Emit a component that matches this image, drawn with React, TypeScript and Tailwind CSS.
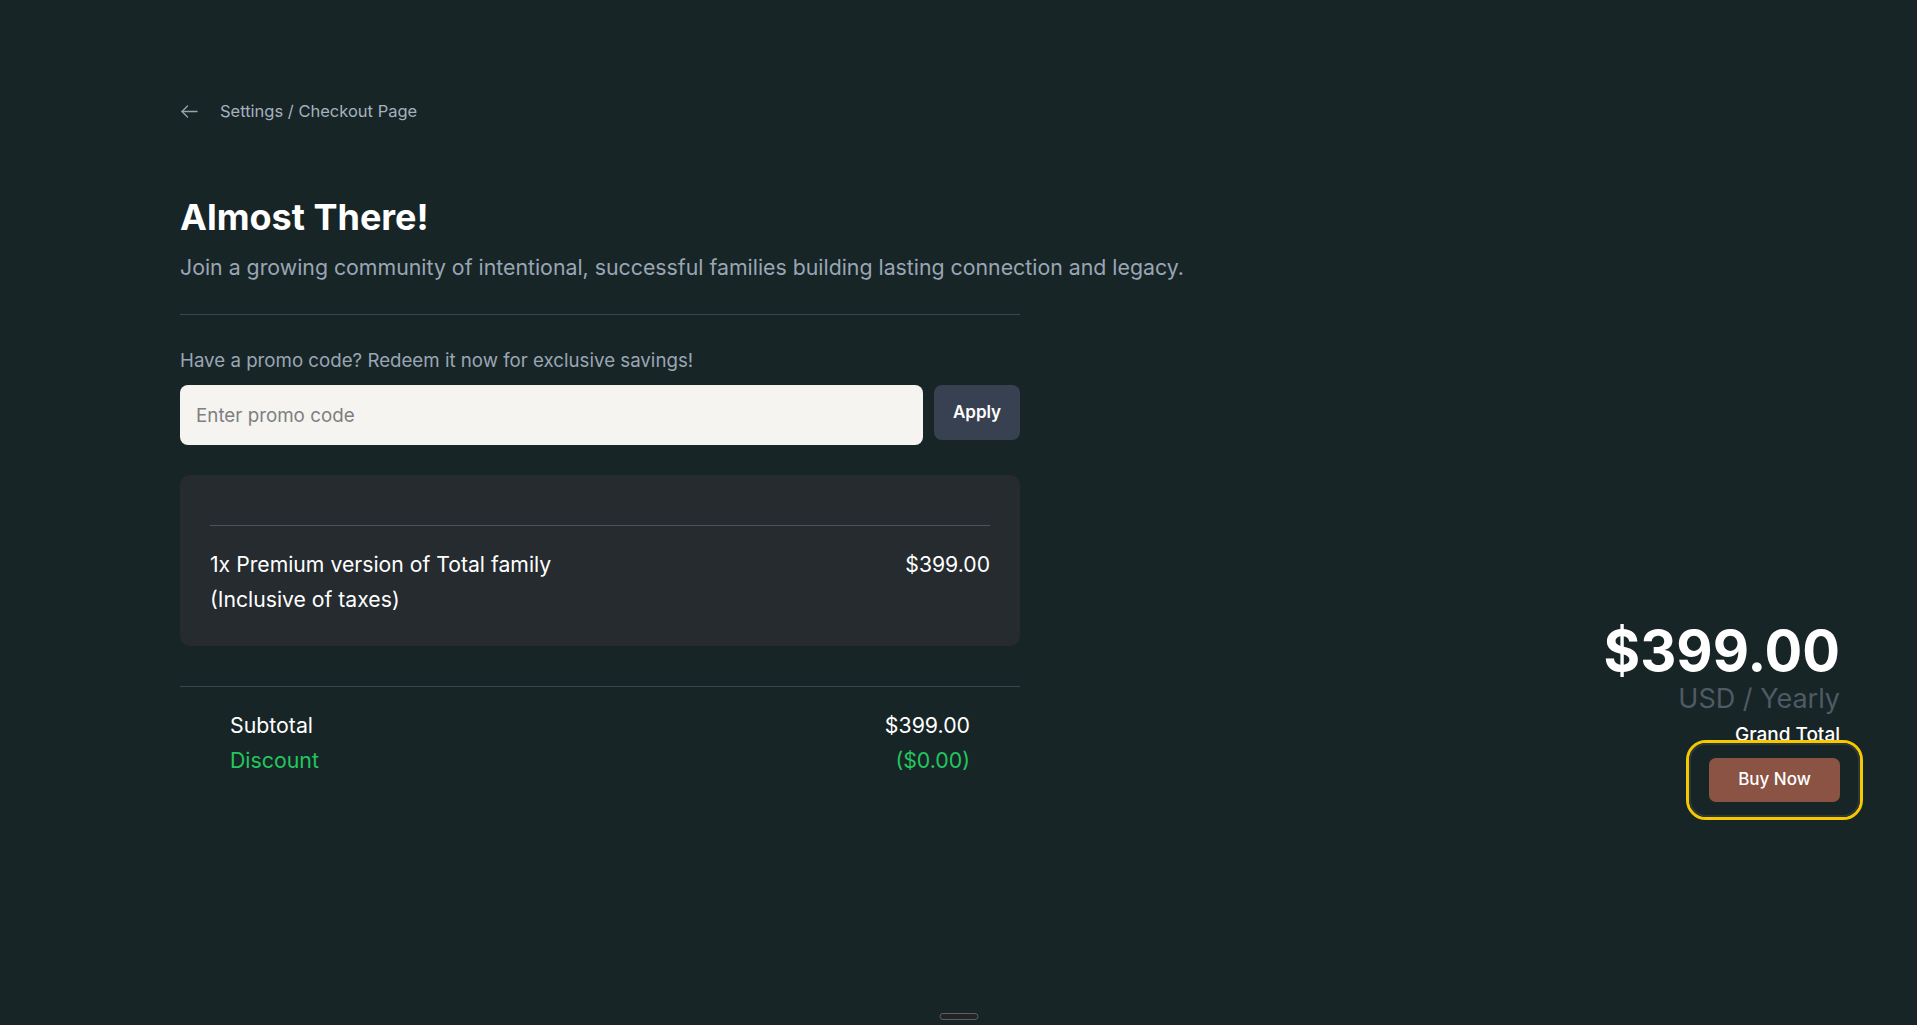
import React from 'react';

function BackArrow() {
  return (
    <svg width="17" height="13" viewBox="0 0 17 13" fill="none" stroke="#9aa3ad" strokeWidth="1.3" strokeLinecap="round" strokeLinejoin="round">
      <path d="M16 6.5H1" />
      <path d="M6.5 1 1 6.5 6.5 12" />
    </svg>
  );
}

export default function App() {
  return (
    <div className="relative min-h-screen bg-[#182527] font-['Inter',sans-serif] text-white">
      <div className="flex pl-[180px] pr-[77px]">
        {/* left column */}
        <div className="pt-[99px]">
          <div className="flex h-6 items-center gap-[22px] pl-[1px]">
            <BackArrow />
            <span className="text-[16.5px] text-[#a6b1bd]">Settings / Checkout Page</span>
          </div>

          <h1 className="mt-[71px] text-[36px] font-bold leading-[46px]">Almost There!</h1>
          <p className="mt-[12px] whitespace-nowrap text-[21.3px] leading-[30px] text-[#9aa6b4]">
            Join a growing community of intentional, successful families building lasting connection and legacy.
          </p>

          <div className="w-[840px]">
            <div className="mt-[32px] h-px bg-[#3b4652]" />

            <p className="mt-[32px] text-[18.7px] leading-[28px] text-[#9aa6b4]">
              Have a promo code? Redeem it now for exclusive savings!
            </p>
            <div className="mt-[10px] flex items-start gap-[11px]">
              <input
                type="text"
                placeholder="Enter promo code"
                className="h-[60px] flex-1 rounded-[8px] bg-[#f5f4f0] px-[16px] text-[18.8px] text-gray-800 outline-none placeholder:text-[#7d7f82]"
              />
              <button className="h-[55px] w-[86px] rounded-[8px] bg-[#374151] text-[17px] font-semibold text-white">
                Apply
              </button>
            </div>

            <div className="mt-[30px] rounded-[10px] bg-[#252b2f] px-[30px] pb-[29px] pt-[50px]">
              <div className="h-px bg-[#4a525c]" />
              <div className="mt-[21px] flex justify-between text-[21.2px] leading-[35px]">
                <div>
                  <div>1x Premium version of Total family</div>
                  <div>(Inclusive of taxes)</div>
                </div>
                <div>$399.00</div>
              </div>
            </div>

            <div className="mt-[40px] h-px bg-[#3b4652]" />

            <div className="mt-[21px] px-[50px] text-[21.3px] leading-[35px]">
              <div className="flex justify-between">
                <span>Subtotal</span>
                <span>$399.00</span>
              </div>
              <div className="flex justify-between text-[#22c55e]">
                <span>Discount</span>
                <span>($0.00)</span>
              </div>
            </div>
          </div>
        </div>

        {/* right column */}
        <div className="flex flex-1 flex-col items-end pt-[623px]">
          <div className="text-[56px] font-bold leading-none">$399.00</div>
          <div className="mt-[6px] text-[27px] leading-none text-[#4f5a64]">USD / Yearly</div>
          <div className="mt-[13px] text-[19px] font-medium leading-none">Grand Total</div>
          <div className="relative mt-[14px]">
            <span className="pointer-events-none absolute -bottom-[18px] -left-[23px] -right-[23px] -top-[18px] rounded-[20px] border-[3px] border-[#f5c800]">
              <span className="block h-full w-full rounded-[17px] border-2 border-[#2c3737]" />
            </span>
            <button className="relative h-[44px] w-[131px] rounded-[7px] bg-[#8a5344] text-[17px] font-medium text-white">
              Buy Now
            </button>
          </div>
        </div>
      </div>

      <div className="absolute bottom-[5px] left-1/2 h-[7px] w-[39px] -translate-x-1/2 rounded-full border border-[#5a5f63] bg-[#222426]" />
    </div>
  );
}
